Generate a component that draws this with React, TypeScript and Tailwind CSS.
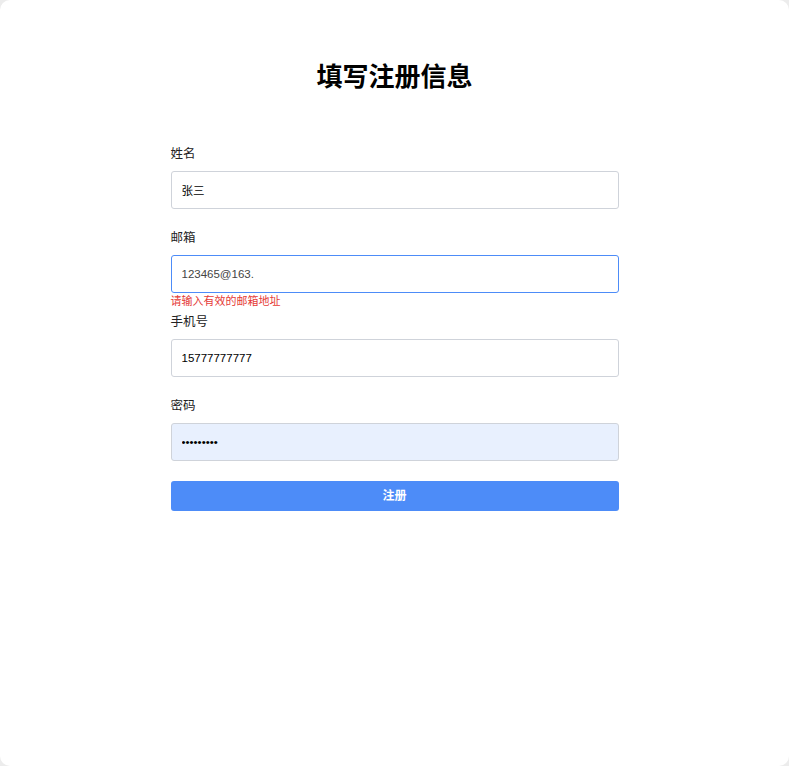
import React from 'react';

const font = { fontFamily: '"Liberation Sans", "Noto Sans CJK SC", sans-serif' };

interface FieldProps {
  label: string;
  value: string;
  type?: string;
  focused?: boolean;
  autofill?: boolean;
  error?: string;
  muted?: boolean;
}

const Field: React.FC<FieldProps> = ({ label, value, type = 'text', focused, autofill, error, muted }) => {
  return (
    <div className="flex flex-col">
      <label className="text-[12.5px] leading-[18px] text-[#222] mb-[8px]">{label}</label>
      <input
        type={type}
        defaultValue={value}
        readOnly
        className={
          'h-[38px] w-full rounded-[3px] border px-[10px] text-[11.5px] outline-none ' +
          (focused ? 'border-[#4d8cf8] ' : 'border-[#cfd3da] ') +
          (autofill ? 'bg-[#e8f0fe] ' : 'bg-white ') +
          (muted ? 'text-[#444]' : 'text-black')
        }
        style={font}
      />
      <div className="h-[20px]">
        {error && <p className="text-[11px] leading-[16px] text-[#e53935]">{error}</p>}
      </div>
    </div>
  );
};

export default function App() {
  return (
    <div className="min-h-screen bg-[#ececec]" style={font}>
      <div className="h-[766px] w-full rounded-[10px] bg-white">
        <h1 className="pt-[62px] text-center text-[26px] leading-[30px] font-bold text-black">
          填写注册信息
        </h1>
        <form className="mx-auto mt-[53px] w-[448px]">
          <Field label="姓名" value="张三" />
          <Field label="邮箱" value="123465@163." focused muted error="请输入有效的邮箱地址" />
          <Field label="手机号" value="15777777777" />
          <Field label="密码" value="123456789" type="password" autofill />
          <button
            type="button"
            className="h-[30px] w-full rounded-[3px] bg-[#4d8cf8] text-[12px] font-bold text-white"
          >
            注册
          </button>
        </form>
      </div>
    </div>
  );
}
